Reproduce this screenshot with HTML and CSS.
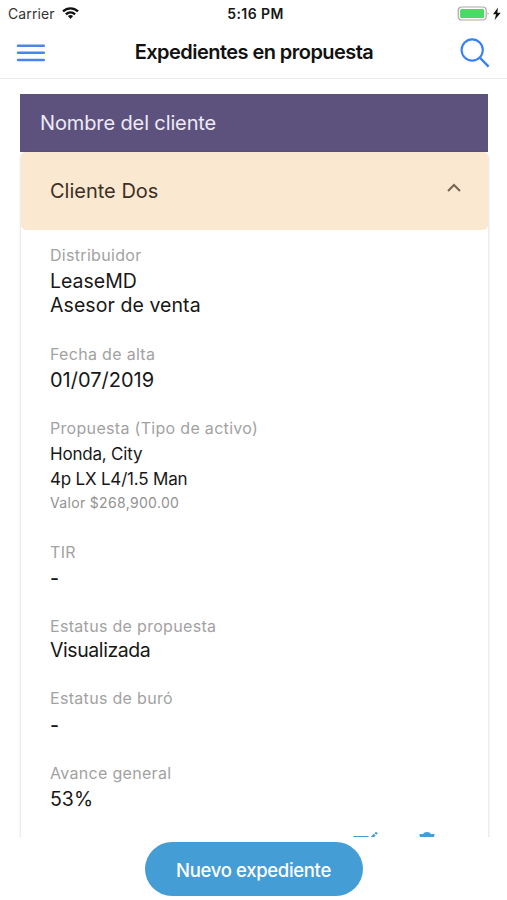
FILE: index.html
```html
<!DOCTYPE html>
<html lang="es">
<head>
<meta charset="utf-8">
<title>Expedientes en propuesta</title>
<link rel="stylesheet" href="styles.css">
</head>
<body>
<div class="status">
  <div class="carrier"><span>Carrier</span>
    <svg width="17" height="12" viewBox="0 0 17 12"><g fill="none" stroke="#111" stroke-width="2.3"><path d="M1 4.4C5.3.3 11.7.3 16 4.4"/><path d="M3.9 7.3C6.6 4.8 10.4 4.8 13.1 7.3"/></g><path d="M5.9 9.1Q8.5 7.1 11.1 9.1L8.5 11.9Z" fill="#111"/></svg>
  </div>
  <div class="time">5:16 PM</div>
  <div class="battery">
    <svg width="44" height="16" viewBox="0 0 44 16"><rect x="1.2" y="1" width="28" height="13" rx="3.5" fill="#fff" stroke="#aaa" stroke-width="1.2"/><rect x="3.1" y="3" width="24" height="9" rx="1.5" fill="#4cd964"/><path d="M30.6 5.5q1.8 2 0 4z" fill="#aaa"/><path d="M41 1.5 36 8.2H39L37.7 14 43.7 6.7H40.3Z" fill="#111"/></svg>
  </div>
</div>
<header class="nav">
  <svg width="30" height="20" viewBox="0 0 30 20" stroke="#4785ef" stroke-width="2.5" stroke-linecap="round"><path d="M2 2.7H27.8M2 9.8H27.8M2 17H27.8"/></svg>
  <h1>Expedientes en propuesta</h1>
  <svg width="30" height="30" viewBox="0 0 30 30" fill="none" stroke="#3880f5" stroke-width="2.1"><circle cx="12.2" cy="12" r="10.6"/><path d="M19.7 19.5 28.6 28.6" stroke-width="2.4"/></svg>
</header>
<main class="content">
  <div class="heading">Nombre del cliente</div>
  <section class="card">
    <div class="client"><span>Cliente Dos</span>
      <svg width="16" height="12" viewBox="0 0 16 12" fill="none" stroke="#776655" stroke-width="2.1"><path d="M2 9 8 3 14 9"/></svg>
    </div>
    <dl class="fields">
      <div class="field f-dist"><dt>Distribuidor</dt><dd class="v-lease">LeaseMD</dd><dd class="v-asesor">Asesor de venta</dd></div>
      <div class="field f-date"><dt>Fecha de alta</dt><dd class="v-date">01/07/2019</dd></div>
      <div class="field f-offer"><dt>Propuesta (Tipo de activo)</dt><dd>Honda, City</dd><dd class="v-model">4p LX L4/1.5 Man</dd><dd class="price">Valor $268,900.00</dd></div>
      <div class="field f-tir"><dt>TIR</dt><dd class="dash">-</dd></div>
      <div class="field f-status"><dt>Estatus de propuesta</dt><dd>Visualizada</dd></div>
      <div class="field f-buro"><dt>Estatus de buró</dt><dd class="dash">-</dd></div>
      <div class="field f-progress"><dt>Avance general</dt><dd>53%</dd></div>
    </dl>
    <div class="actions">
      <svg width="26" height="24" viewBox="0 0 26 24"><path d="M1 5.5Q1 3.9 2.5 3.9H17L15.5 6H1Z" fill="#459dd3"/><path d="M18 5.8 21.7 1.8 23.6 3.5 21.4 6H18Z" fill="#459dd3"/><path d="M22.4 1.2 24-.2 25.8 1.2 24.5 2.7Z" fill="#459dd3"/></svg>
      <svg width="16" height="24" viewBox="0 0 16 24"><path d="M.6 2H4Q5 0 8 0T12 2H15.4V4L14.2 5.8V22H1.8V5.8L.6 4Z" fill="#459dd3"/></svg>
    </div>
  </section>
</main>
<footer class="footer"><button>Nuevo expediente</button></footer>
</body>
</html>
```

FILE: styles.css
```css
* { box-sizing: border-box; }
body {
  margin: 0;
  height: 900px;
  overflow: hidden;
  display: flex;
  flex-direction: column;
  background: #fff;
  color: #171717;
  font-family: Inter, "Liberation Sans", sans-serif;
}
svg { display: block; flex: none; }
.status {
  height: 27px;
  padding: 0 6px 0 8px;
  display: grid;
  grid-template-columns: 1fr auto 1fr;
  align-items: center;
  font-size: 14px;
}
.carrier { display: flex; align-items: center; gap: 7px; color: #333; letter-spacing: .1px; }
.carrier svg { margin-bottom: 2px; }
.time { font-weight: 600; font-size: 14px; letter-spacing: .4px; padding-left: 2px; }
.battery { justify-self: end; }
.nav {
  height: 52px;
  padding: 0 17px 0 16px;
  display: flex;
  align-items: center;
  justify-content: space-between;
  border-bottom: 1px solid #ebebeb;
}
h1 { margin: 0; padding: 0 0 2px 2px; font-size: 20px; line-height: 26px; font-weight: 600; letter-spacing: -.55px; color: #111; }
.content { height: 758px; overflow: hidden; padding: 14.5px 20px 0; }
.heading {
  height: 58.5px;
  margin-right: -.5px;
  padding-left: 20px;
  line-height: 59px;
  font-size: 20px;
  letter-spacing: -.12px;
  background: #5c527d;
  color: #eeeaf8;
}
.card { height: 750px; margin: 0 -.5px 0 .5px; border-radius: 5px; background: #fff; box-shadow: 0 1px 3px rgba(0, 0, 0, .22); }
.client {
  height: 78px;
  padding: 0 26px 0 29.5px;
  display: flex;
  align-items: center;
  justify-content: space-between;
  border-radius: 5px;
  background: #fbe8d0;
  color: #3b3026;
  font-size: 20px;
}
.client svg { margin-bottom: 7px; }
.fields { margin: 0; height: 600px; padding: 13px 29.5px 0; }
dt { height: 26px; line-height: 24px; font-size: 16px; letter-spacing: .31px; color: #a2a2a2; }
dd { margin: 0; height: 24px; line-height: 24px; font-size: 19.5px; }
.f-dist { height: 99px; }
.f-date { height: 75px; }
.v-date { font-size: 20px; }
.v-asesor { letter-spacing: .07px; }
.f-offer { height: 123px; }
.f-offer dt { height: 25px; line-height: 23px; }
.f-offer dd { height: 24.5px; font-size: 17px; letter-spacing: -.2px; }
.f-offer .price { font-size: 14px; color: #929292; letter-spacing: .33px; }
.f-tir { height: 74px; }
.dash { font-weight: 500; }
.f-status { height: 73px; }
.f-status dt { height: 24px; }
.f-status dd { letter-spacing: -.42px; }
.f-buro { height: 74px; }
.f-buro dt { line-height: 23px; }
.actions { display: flex; gap: 41px; padding: 2px 0 0 331.5px; }
.footer { height: 63px; padding-top: 5px; text-align: center; }
button {
  width: 218px;
  height: 54px;
  padding: 2px 0 0;
  border: 0;
  border-radius: 27px;
  background: #459dd5;
  color: #fff;
  font: 500 18.5px/52px Inter, "Liberation Sans", sans-serif;
  letter-spacing: -.33px;
}
```
